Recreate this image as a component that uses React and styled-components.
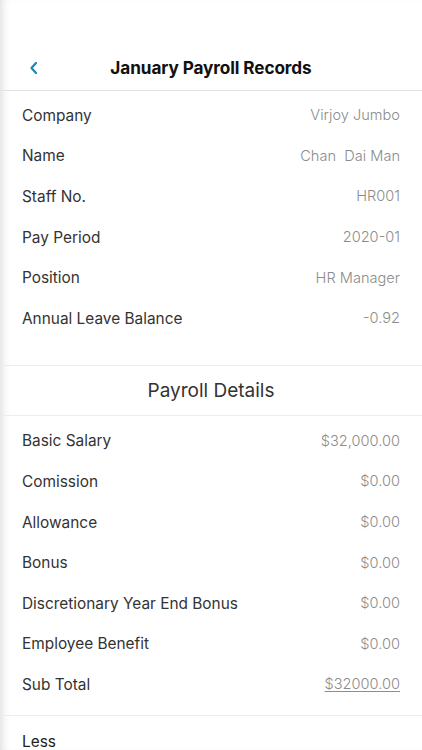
import React from 'react';
import styled, { createGlobalStyle } from 'styled-components';

const GlobalStyle = createGlobalStyle`
  html, body {
    margin: 0;
    padding: 0;
    background: #ffffff;
  }
  body {
    font-family: Inter, "Noto Sans", "Liberation Sans", sans-serif;
    -webkit-font-smoothing: antialiased;
  }
`;

const Screen = styled.div`
  position: relative;
  width: 422px;
  height: 750px;
  overflow: hidden;
  background: #fff;
  box-shadow: inset 8px 0 8px -6px rgba(0, 0, 0, 0.14);
`;

const Header = styled.div`
  margin-top: 45px;
  height: 45px;
  display: flex;
  align-items: center;
  justify-content: center;
  position: relative;
  border-bottom: 1px solid #e2e2e2;
`;

const BackButton = styled.button`
  position: absolute;
  left: 24px;
  top: 50%;
  transform: translateY(-50%);
  border: 0;
  background: none;
  padding: 4px;
  display: flex;
  cursor: pointer;
`;

const Title = styled.h1`
  margin: 0;
  font-size: 17.2px;
  font-weight: 700;
  color: #111;
  letter-spacing: -0.1px;
`;

const Section = styled.div`
  padding: ${p => p.$pad || '4px 0 26px'};
  border-bottom: ${p => (p.$line ? '1px solid #ececec' : 'none')};
`;

const SectionTitle = styled.div`
  height: 49px;
  display: flex;
  align-items: center;
  justify-content: center;
  font-size: 19px;
  color: #333;
  border-bottom: 1px solid #ececec;
`;

const Row = styled.div`
  height: 40.6px;
  display: flex;
  align-items: center;
  justify-content: space-between;
  padding: 0 22px;
`;

const Label = styled.span`
  font-size: 15.4px;
  color: #333;
  font-weight: 400;
`;

const Value = styled.span`
  font-size: 14.6px;
  color: #8c8c8c;
  font-weight: 300;
  white-space: pre;
  text-decoration: ${p => (p.$underline ? 'underline' : 'none')};
  text-underline-offset: 2px;
`;

const LessLink = styled.div`
  padding: 16px 22px 0;
  font-size: 15.4px;
  color: #222;
  text-decoration: underline;
  text-underline-offset: 3px;
`;

const info = [
  ['Company', 'Virjoy Jumbo'],
  ['Name', 'Chan  Dai Man'],
  ['Staff No.', 'HR001'],
  ['Pay Period', '2020-01'],
  ['Position', 'HR Manager'],
  ['Annual Leave Balance', '-0.92'],
];

const details = [
  ['Basic Salary', '$32,000.00'],
  ['Comission', '$0.00'],
  ['Allowance', '$0.00'],
  ['Bonus', '$0.00'],
  ['Discretionary Year End Bonus', '$0.00'],
  ['Employee Benefit', '$0.00'],
  ['Sub Total', '$32000.00', true],
];

const Chevron = () => (
  <svg width="12" height="14" viewBox="0 0 12 14">
    <path d="M8 2 L3.5 7 L8 12" fill="none" stroke="#1a86b8" strokeWidth="2.2" strokeLinecap="round" strokeLinejoin="round" />
  </svg>
);

export default function App() {
  return (
    <Screen>
      <GlobalStyle />
      <Header>
        <BackButton aria-label="Back"><Chevron /></BackButton>
        <Title>January Payroll Records</Title>
      </Header>
      <Section $line>
        {info.map(([k, v]) => (
          <Row key={k}>
            <Label>{k}</Label>
            <Value>{v}</Value>
          </Row>
        ))}
      </Section>
      <SectionTitle>Payroll Details</SectionTitle>
      <Section $line $pad="5px 0 10px">
        {details.map(([k, v, u]) => (
          <Row key={k}>
            <Label>{k}</Label>
            <Value $underline={u}>{v}</Value>
          </Row>
        ))}
      </Section>
      <LessLink>Less</LessLink>
    </Screen>
  );
}
